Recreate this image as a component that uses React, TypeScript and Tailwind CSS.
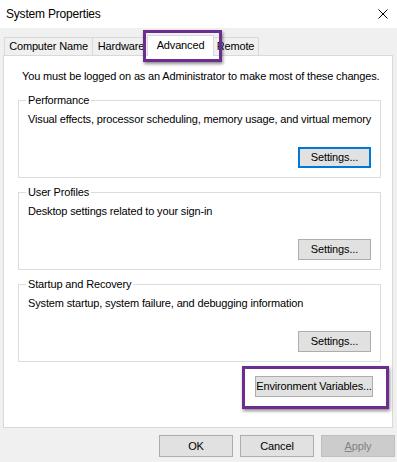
import React from "react";

function Btn({
  label,
  w = "w-[73px]",
  h = "h-[21px]",
  focused = false,
  disabled = false,
}: {
  label: React.ReactNode;
  w?: string;
  h?: string;
  focused?: boolean;
  disabled?: boolean;
}) {
  const base = `${w} ${h} flex items-center justify-center leading-none whitespace-nowrap`;
  if (disabled)
    return (
      <div className={`${base} bg-[#cccccc] border border-[#bfbfbf] text-[#838383]`}>{label}</div>
    );
  if (focused)
    return (
      <div className={`${base} bg-[#e1e1e1] border-2 border-[#0078d7] text-black`}>{label}</div>
    );
  return <div className={`${base} bg-[#e1e1e1] border border-[#adadad] text-black`}>{label}</div>;
}

function Group({
  title,
  desc,
  focused = false,
}: {
  title: string;
  desc: string;
  focused?: boolean;
}) {
  return (
    <div className="relative ml-[14px] mr-[11px] h-[78px] border border-[#dcdcdc] pt-[11px] pl-[9px] pr-[9px] pb-[9px] flex flex-col">
      <span className="absolute top-[-8px] left-[7px] px-[2px] bg-white leading-[15px] whitespace-nowrap">
        {title}
      </span>
      <div className="leading-[15px] whitespace-nowrap">{desc}</div>
      <div className="mt-auto self-end">
        <Btn label="Settings..." focused={focused} />
      </div>
    </div>
  );
}

function Tab({
  label,
  w,
  selected = false,
  last = false,
}: {
  label: string;
  w: string;
  selected?: boolean;
  last?: boolean;
}) {
  if (selected)
    return (
      <div
        className={`${w} relative z-10 -mx-[2px] -mb-px h-[21px] bg-white border border-b-0 border-[#d9d9d9] flex items-center justify-center leading-none pb-[1px] whitespace-nowrap`}
      >
        {label}
      </div>
    );
  return (
    <div
      className={`${w} h-[18px] bg-[#f0f0f0] border-t border-l ${last ? "border-r" : ""} border-[#d9d9d9] flex items-center justify-center leading-none whitespace-nowrap`}
    >
      {label}
    </div>
  );
}

export default function App() {
  return (
    <div className="relative w-[397px] h-[462px] bg-[#f0f0f0] font-['Liberation_Sans',Arial,sans-serif] text-[11px] tracking-[-0.15px] text-black overflow-hidden">
      {/* Title bar */}
      <div className="h-[28px] bg-white flex items-center justify-between pl-[6px] pr-[8px]">
        <span className="text-[12px] tracking-[-0.2px] leading-none">System Properties</span>
        <svg width="10" height="10" viewBox="0 0 10 10" className="mr-[1px]">
          <path d="M0.5 0.5 L9.5 9.5 M9.5 0.5 L0.5 9.5" stroke="#000" strokeWidth="1" fill="none" />
        </svg>
      </div>

      {/* Tabs */}
      <div className="mt-[9px] h-[18px] pl-[4px] flex items-end">
        <Tab label="Computer Name" w="w-[88px]" />
        <Tab label="Hardware" w="w-[57px]" />
        <Tab label="Advanced" w="w-[67px]" selected />
        <Tab label="Remote" w="w-[47px]" last />
      </div>

      {/* Panel */}
      <div className="ml-[3px] w-[390px] h-[373px] bg-white border border-[#d9d9d9] pt-[13px] flex flex-col">
        <p className="pl-[18px] leading-[15px] mb-[16px] whitespace-nowrap">
          You must be logged on as an Administrator to make most of these changes.
        </p>
        <Group
          title="Performance"
          desc="Visual effects, processor scheduling, memory usage, and virtual memory"
          focused
        />
        <div className="mt-[14px]">
          <Group title="User Profiles" desc="Desktop settings related to your sign-in" />
        </div>
        <div className="mt-[14px]">
          <Group
            title="Startup and Recovery"
            desc="System startup, system failure, and debugging information"
          />
        </div>
        <div className="mt-[14px] self-end mr-[19px]">
          <Btn label="Environment Variables..." w="w-[118px]" />
        </div>
      </div>

      {/* Bottom buttons */}
      <div className="mt-[7px] flex justify-end gap-[7px] pr-[2px]">
        <Btn label="OK" w="w-[74px]" h="h-[22px]" />
        <Btn label="Cancel" w="w-[74px]" h="h-[22px]" />
        <Btn
          label={
            <span>
              <span className="underline">A</span>pply
            </span>
          }
          w="w-[74px]"
          h="h-[22px]"
          disabled
        />
      </div>

      {/* Purple highlight overlays */}
      <div className="absolute left-[143px] top-[30px] w-[79px] h-[32px] border-[3px] border-[#6b2d90] shadow-[1px_2px_3px_rgba(0,0,0,0.45)] z-20 pointer-events-none" />
      <div className="absolute left-[242px] top-[366px] w-[147px] h-[43px] border-[3px] border-[#6b2d90] shadow-[1px_2px_3px_rgba(0,0,0,0.45)] z-20 pointer-events-none" />
    </div>
  );
}
